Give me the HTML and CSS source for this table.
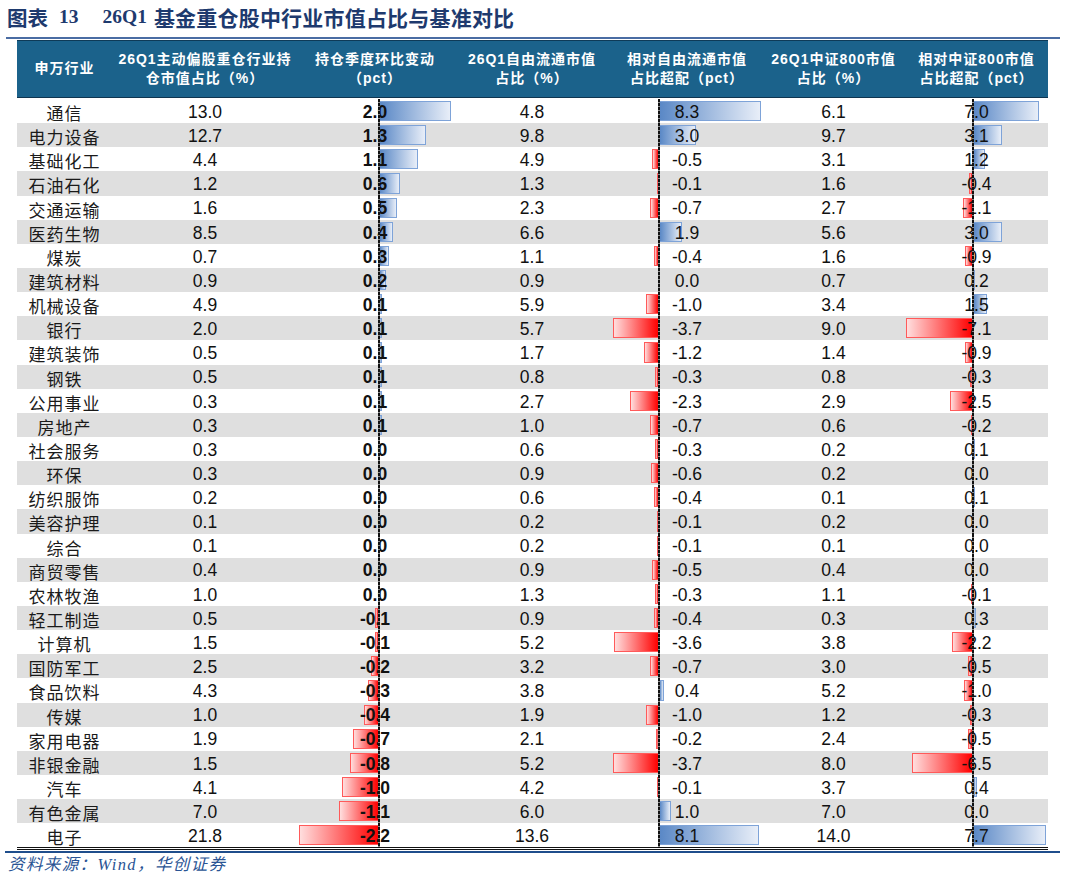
FILE: index.html
```html
<!DOCTYPE html>
<html lang="zh">
<head>
<meta charset="utf-8">
<title>26Q1 基金重仓股中行业市值占比与基准对比</title>
<link rel="stylesheet" href="styles.css">
</head>
<body>
<div class="title">
  <span class="t-lbl">图表</span><span class="t-no">13</span><span class="t-q">26Q1</span><span class="t-main">基金重仓股中行业市值占比与基准对比</span>
</div>
<div class="tbl">
  <div class="head">
    <div class="h">申万行业</div>
    <div class="h">26Q1主动偏股重仓行业持<br>仓市值占比（%）</div>
    <div class="h">持仓季度环比变动<br>（pct）</div>
    <div class="h">26Q1自由流通市值<br>占比（%）</div>
    <div class="h">相对自由流通市值<br>占比超配（pct）</div>
    <div class="h">26Q1中证800市值<br>占比（%）</div>
    <div class="h">相对中证800市值<br>占比超配（pct）</div>
  </div>
  <div class="rows">
    <div class="row"><div class="c name">通信</div><div class="c">13.0</div><div class="c bc b1"><div class="trk"><i class="bar p" style="--a:2.0"></i></div><span class="v bold">2.0</span></div><div class="c">4.8</div><div class="c bc b2"><div class="trk"><i class="bar p" style="--a:8.3"></i></div><span class="v">8.3</span></div><div class="c">6.1</div><div class="c bc b3"><div class="trk"><i class="bar p" style="--a:7.0"></i></div><span class="v">7.0</span></div></div>
    <div class="row"><div class="c name">电力设备</div><div class="c">12.7</div><div class="c bc b1"><div class="trk"><i class="bar p" style="--a:1.3"></i></div><span class="v bold">1.3</span></div><div class="c">9.8</div><div class="c bc b2"><div class="trk"><i class="bar p" style="--a:3.0"></i></div><span class="v">3.0</span></div><div class="c">9.7</div><div class="c bc b3"><div class="trk"><i class="bar p" style="--a:3.1"></i></div><span class="v">3.1</span></div></div>
    <div class="row"><div class="c name">基础化工</div><div class="c">4.4</div><div class="c bc b1"><div class="trk"><i class="bar p" style="--a:1.1"></i></div><span class="v bold">1.1</span></div><div class="c">4.9</div><div class="c bc b2"><div class="trk"><i class="bar n" style="--a:0.5"></i></div><span class="v">-0.5</span></div><div class="c">3.1</div><div class="c bc b3"><div class="trk"><i class="bar p" style="--a:1.2"></i></div><span class="v">1.2</span></div></div>
    <div class="row"><div class="c name">石油石化</div><div class="c">1.2</div><div class="c bc b1"><div class="trk"><i class="bar p" style="--a:0.6"></i></div><span class="v bold">0.6</span></div><div class="c">1.3</div><div class="c bc b2"><div class="trk"><i class="bar n" style="--a:0.1"></i></div><span class="v">-0.1</span></div><div class="c">1.6</div><div class="c bc b3"><div class="trk"><i class="bar n" style="--a:0.4"></i></div><span class="v">-0.4</span></div></div>
    <div class="row"><div class="c name">交通运输</div><div class="c">1.6</div><div class="c bc b1"><div class="trk"><i class="bar p" style="--a:0.5"></i></div><span class="v bold">0.5</span></div><div class="c">2.3</div><div class="c bc b2"><div class="trk"><i class="bar n" style="--a:0.7"></i></div><span class="v">-0.7</span></div><div class="c">2.7</div><div class="c bc b3"><div class="trk"><i class="bar n" style="--a:1.1"></i></div><span class="v">-1.1</span></div></div>
    <div class="row"><div class="c name">医药生物</div><div class="c">8.5</div><div class="c bc b1"><div class="trk"><i class="bar p" style="--a:0.4"></i></div><span class="v bold">0.4</span></div><div class="c">6.6</div><div class="c bc b2"><div class="trk"><i class="bar p" style="--a:1.9"></i></div><span class="v">1.9</span></div><div class="c">5.6</div><div class="c bc b3"><div class="trk"><i class="bar p" style="--a:3.0"></i></div><span class="v">3.0</span></div></div>
    <div class="row"><div class="c name">煤炭</div><div class="c">0.7</div><div class="c bc b1"><div class="trk"><i class="bar p" style="--a:0.3"></i></div><span class="v bold">0.3</span></div><div class="c">1.1</div><div class="c bc b2"><div class="trk"><i class="bar n" style="--a:0.4"></i></div><span class="v">-0.4</span></div><div class="c">1.6</div><div class="c bc b3"><div class="trk"><i class="bar n" style="--a:0.9"></i></div><span class="v">-0.9</span></div></div>
    <div class="row"><div class="c name">建筑材料</div><div class="c">0.9</div><div class="c bc b1"><div class="trk"><i class="bar p" style="--a:0.2"></i></div><span class="v bold">0.2</span></div><div class="c">0.9</div><div class="c bc b2"><div class="trk"></div><span class="v">0.0</span></div><div class="c">0.7</div><div class="c bc b3"><div class="trk"><i class="bar p" style="--a:0.2"></i></div><span class="v">0.2</span></div></div>
    <div class="row"><div class="c name">机械设备</div><div class="c">4.9</div><div class="c bc b1"><div class="trk"><i class="bar p" style="--a:0.1"></i></div><span class="v bold">0.1</span></div><div class="c">5.9</div><div class="c bc b2"><div class="trk"><i class="bar n" style="--a:1.0"></i></div><span class="v">-1.0</span></div><div class="c">3.4</div><div class="c bc b3"><div class="trk"><i class="bar p" style="--a:1.5"></i></div><span class="v">1.5</span></div></div>
    <div class="row"><div class="c name">银行</div><div class="c">2.0</div><div class="c bc b1"><div class="trk"><i class="bar p" style="--a:0.1"></i></div><span class="v bold">0.1</span></div><div class="c">5.7</div><div class="c bc b2"><div class="trk"><i class="bar n" style="--a:3.7"></i></div><span class="v">-3.7</span></div><div class="c">9.0</div><div class="c bc b3"><div class="trk"><i class="bar n" style="--a:7.1"></i></div><span class="v">-7.1</span></div></div>
    <div class="row"><div class="c name">建筑装饰</div><div class="c">0.5</div><div class="c bc b1"><div class="trk"><i class="bar p" style="--a:0.1"></i></div><span class="v bold">0.1</span></div><div class="c">1.7</div><div class="c bc b2"><div class="trk"><i class="bar n" style="--a:1.2"></i></div><span class="v">-1.2</span></div><div class="c">1.4</div><div class="c bc b3"><div class="trk"><i class="bar n" style="--a:0.9"></i></div><span class="v">-0.9</span></div></div>
    <div class="row"><div class="c name">钢铁</div><div class="c">0.5</div><div class="c bc b1"><div class="trk"><i class="bar p" style="--a:0.1"></i></div><span class="v bold">0.1</span></div><div class="c">0.8</div><div class="c bc b2"><div class="trk"><i class="bar n" style="--a:0.3"></i></div><span class="v">-0.3</span></div><div class="c">0.8</div><div class="c bc b3"><div class="trk"><i class="bar n" style="--a:0.3"></i></div><span class="v">-0.3</span></div></div>
    <div class="row"><div class="c name">公用事业</div><div class="c">0.3</div><div class="c bc b1"><div class="trk"><i class="bar p" style="--a:0.1"></i></div><span class="v bold">0.1</span></div><div class="c">2.7</div><div class="c bc b2"><div class="trk"><i class="bar n" style="--a:2.3"></i></div><span class="v">-2.3</span></div><div class="c">2.9</div><div class="c bc b3"><div class="trk"><i class="bar n" style="--a:2.5"></i></div><span class="v">-2.5</span></div></div>
    <div class="row"><div class="c name">房地产</div><div class="c">0.3</div><div class="c bc b1"><div class="trk"><i class="bar p" style="--a:0.1"></i></div><span class="v bold">0.1</span></div><div class="c">1.0</div><div class="c bc b2"><div class="trk"><i class="bar n" style="--a:0.7"></i></div><span class="v">-0.7</span></div><div class="c">0.6</div><div class="c bc b3"><div class="trk"><i class="bar n" style="--a:0.2"></i></div><span class="v">-0.2</span></div></div>
    <div class="row"><div class="c name">社会服务</div><div class="c">0.3</div><div class="c bc b1"><div class="trk"></div><span class="v bold">0.0</span></div><div class="c">0.6</div><div class="c bc b2"><div class="trk"><i class="bar n" style="--a:0.3"></i></div><span class="v">-0.3</span></div><div class="c">0.2</div><div class="c bc b3"><div class="trk"><i class="bar p" style="--a:0.1"></i></div><span class="v">0.1</span></div></div>
    <div class="row"><div class="c name">环保</div><div class="c">0.3</div><div class="c bc b1"><div class="trk"></div><span class="v bold">0.0</span></div><div class="c">0.9</div><div class="c bc b2"><div class="trk"><i class="bar n" style="--a:0.6"></i></div><span class="v">-0.6</span></div><div class="c">0.2</div><div class="c bc b3"><div class="trk"></div><span class="v">0.0</span></div></div>
    <div class="row"><div class="c name">纺织服饰</div><div class="c">0.2</div><div class="c bc b1"><div class="trk"></div><span class="v bold">0.0</span></div><div class="c">0.6</div><div class="c bc b2"><div class="trk"><i class="bar n" style="--a:0.4"></i></div><span class="v">-0.4</span></div><div class="c">0.1</div><div class="c bc b3"><div class="trk"><i class="bar p" style="--a:0.1"></i></div><span class="v">0.1</span></div></div>
    <div class="row"><div class="c name">美容护理</div><div class="c">0.1</div><div class="c bc b1"><div class="trk"></div><span class="v bold">0.0</span></div><div class="c">0.2</div><div class="c bc b2"><div class="trk"><i class="bar n" style="--a:0.1"></i></div><span class="v">-0.1</span></div><div class="c">0.2</div><div class="c bc b3"><div class="trk"></div><span class="v">0.0</span></div></div>
    <div class="row"><div class="c name">综合</div><div class="c">0.1</div><div class="c bc b1"><div class="trk"></div><span class="v bold">0.0</span></div><div class="c">0.2</div><div class="c bc b2"><div class="trk"><i class="bar n" style="--a:0.1"></i></div><span class="v">-0.1</span></div><div class="c">0.1</div><div class="c bc b3"><div class="trk"></div><span class="v">0.0</span></div></div>
    <div class="row"><div class="c name">商贸零售</div><div class="c">0.4</div><div class="c bc b1"><div class="trk"></div><span class="v bold">0.0</span></div><div class="c">0.9</div><div class="c bc b2"><div class="trk"><i class="bar n" style="--a:0.5"></i></div><span class="v">-0.5</span></div><div class="c">0.4</div><div class="c bc b3"><div class="trk"></div><span class="v">0.0</span></div></div>
    <div class="row"><div class="c name">农林牧渔</div><div class="c">1.0</div><div class="c bc b1"><div class="trk"></div><span class="v bold">0.0</span></div><div class="c">1.3</div><div class="c bc b2"><div class="trk"><i class="bar n" style="--a:0.3"></i></div><span class="v">-0.3</span></div><div class="c">1.1</div><div class="c bc b3"><div class="trk"><i class="bar n" style="--a:0.1"></i></div><span class="v">-0.1</span></div></div>
    <div class="row"><div class="c name">轻工制造</div><div class="c">0.5</div><div class="c bc b1"><div class="trk"><i class="bar n" style="--a:0.1"></i></div><span class="v bold">-0.1</span></div><div class="c">0.9</div><div class="c bc b2"><div class="trk"><i class="bar n" style="--a:0.4"></i></div><span class="v">-0.4</span></div><div class="c">0.3</div><div class="c bc b3"><div class="trk"><i class="bar p" style="--a:0.3"></i></div><span class="v">0.3</span></div></div>
    <div class="row"><div class="c name">计算机</div><div class="c">1.5</div><div class="c bc b1"><div class="trk"><i class="bar n" style="--a:0.1"></i></div><span class="v bold">-0.1</span></div><div class="c">5.2</div><div class="c bc b2"><div class="trk"><i class="bar n" style="--a:3.6"></i></div><span class="v">-3.6</span></div><div class="c">3.8</div><div class="c bc b3"><div class="trk"><i class="bar n" style="--a:2.2"></i></div><span class="v">-2.2</span></div></div>
    <div class="row"><div class="c name">国防军工</div><div class="c">2.5</div><div class="c bc b1"><div class="trk"><i class="bar n" style="--a:0.2"></i></div><span class="v bold">-0.2</span></div><div class="c">3.2</div><div class="c bc b2"><div class="trk"><i class="bar n" style="--a:0.7"></i></div><span class="v">-0.7</span></div><div class="c">3.0</div><div class="c bc b3"><div class="trk"><i class="bar n" style="--a:0.5"></i></div><span class="v">-0.5</span></div></div>
    <div class="row"><div class="c name">食品饮料</div><div class="c">4.3</div><div class="c bc b1"><div class="trk"><i class="bar n" style="--a:0.3"></i></div><span class="v bold">-0.3</span></div><div class="c">3.8</div><div class="c bc b2"><div class="trk"><i class="bar p" style="--a:0.4"></i></div><span class="v">0.4</span></div><div class="c">5.2</div><div class="c bc b3"><div class="trk"><i class="bar n" style="--a:1.0"></i></div><span class="v">-1.0</span></div></div>
    <div class="row"><div class="c name">传媒</div><div class="c">1.0</div><div class="c bc b1"><div class="trk"><i class="bar n" style="--a:0.4"></i></div><span class="v bold">-0.4</span></div><div class="c">1.9</div><div class="c bc b2"><div class="trk"><i class="bar n" style="--a:1.0"></i></div><span class="v">-1.0</span></div><div class="c">1.2</div><div class="c bc b3"><div class="trk"><i class="bar n" style="--a:0.3"></i></div><span class="v">-0.3</span></div></div>
    <div class="row"><div class="c name">家用电器</div><div class="c">1.9</div><div class="c bc b1"><div class="trk"><i class="bar n" style="--a:0.7"></i></div><span class="v bold">-0.7</span></div><div class="c">2.1</div><div class="c bc b2"><div class="trk"><i class="bar n" style="--a:0.2"></i></div><span class="v">-0.2</span></div><div class="c">2.4</div><div class="c bc b3"><div class="trk"><i class="bar n" style="--a:0.5"></i></div><span class="v">-0.5</span></div></div>
    <div class="row"><div class="c name">非银金融</div><div class="c">1.5</div><div class="c bc b1"><div class="trk"><i class="bar n" style="--a:0.8"></i></div><span class="v bold">-0.8</span></div><div class="c">5.2</div><div class="c bc b2"><div class="trk"><i class="bar n" style="--a:3.7"></i></div><span class="v">-3.7</span></div><div class="c">8.0</div><div class="c bc b3"><div class="trk"><i class="bar n" style="--a:6.5"></i></div><span class="v">-6.5</span></div></div>
    <div class="row"><div class="c name">汽车</div><div class="c">4.1</div><div class="c bc b1"><div class="trk"><i class="bar n" style="--a:1.0"></i></div><span class="v bold">-1.0</span></div><div class="c">4.2</div><div class="c bc b2"><div class="trk"><i class="bar n" style="--a:0.1"></i></div><span class="v">-0.1</span></div><div class="c">3.7</div><div class="c bc b3"><div class="trk"><i class="bar p" style="--a:0.4"></i></div><span class="v">0.4</span></div></div>
    <div class="row"><div class="c name">有色金属</div><div class="c">7.0</div><div class="c bc b1"><div class="trk"><i class="bar n" style="--a:1.1"></i></div><span class="v bold">-1.1</span></div><div class="c">6.0</div><div class="c bc b2"><div class="trk"><i class="bar p" style="--a:1.0"></i></div><span class="v">1.0</span></div><div class="c">7.0</div><div class="c bc b3"><div class="trk"></div><span class="v">0.0</span></div></div>
    <div class="row"><div class="c name">电子</div><div class="c">21.8</div><div class="c bc b1"><div class="trk"><i class="bar n" style="--a:2.2"></i></div><span class="v bold">-2.2</span></div><div class="c">13.6</div><div class="c bc b2"><div class="trk"><i class="bar p" style="--a:8.1"></i></div><span class="v">8.1</span></div><div class="c">14.0</div><div class="c bc b3"><div class="trk"><i class="bar p" style="--a:7.7"></i></div><span class="v">7.7</span></div></div>
  </div>
</div>
<div class="bline"></div>
<div class="src">资料来源：Wind，华创证券</div>
</body>
</html>
```

FILE: styles.css
```css
* { box-sizing: border-box; }

body {
  margin: 0;
  width: 1066px;
  background: #fff;
  font-family: "Liberation Sans", "Noto Sans CJK SC", sans-serif;
  color: #111;
}

/* ---------- title ---------- */
.title {
  display: flex;
  align-items: center;
  height: 39px;
  margin: 0 6px;
  padding: 0 0 3px 1px;
  border-bottom: 2px solid #4a6ca3;
  color: #1e3a6e;
  font-weight: 700;
  white-space: nowrap;
}
.t-lbl {
  font-family: "Noto Sans CJK SC", sans-serif;
  font-size: 20.5px;
}
.t-no,
.t-q {
  font-family: "Liberation Serif", serif;
  font-size: 19.5px;
}
.t-no { margin-left: 11px; }
.t-q { margin-left: 24px; }
.t-main {
  margin-left: 7px;
  font-family: "Noto Sans CJK SC", sans-serif;
  font-size: 21px;
  letter-spacing: 0.2px;
}

/* ---------- table ---------- */
.tbl {
  --cols: 95px 186px 154px 160px 150px 143px 143px;
  width: 1031px;
  margin: 1px 0 0 17px;
}

.head {
  display: grid;
  grid-template-columns: var(--cols);
  height: 58px;
  background: #1b628b;
  border-top: 1px solid #0e3a57;
  border-bottom: 1px solid #0f3550;
  color: #fff;
}
.h {
  display: flex;
  align-items: center;
  justify-content: center;
  text-align: center;
  font-family: "Liberation Sans", "Noto Sans CJK SC", sans-serif;
  font-size: 14px;
  font-weight: 700;
  line-height: 19.5px;
  letter-spacing: 1px;
}

.rows {
  padding-top: 1px;
  border-bottom: 3px double #111;
}
.row {
  display: grid;
  grid-template-columns: var(--cols);
  height: 24.15px;
}
.row:nth-child(even) { background: #dfdfdf; }

.c {
  display: flex;
  align-items: center;
  justify-content: center;
  padding-top: 3px;
  font-size: 17.5px;
  line-height: 1;
  color: #111;
  white-space: nowrap;
}
.name {
  font-family: "Noto Sans CJK SC", sans-serif;
  font-size: 17px;
  letter-spacing: 1px;
  color: #1a1a1a;
}

/* ---------- data bars ---------- */
.bc { position: relative; }
.b1 { --neg: 2.2; --rng: 4.2; }
.b2 { --neg: 3.7; --rng: 12; }
.b3 { --neg: 7.1; --rng: 14.8; }

.trk {
  position: absolute;
  top: 2px;
  bottom: 2px;
  left: 1px;
  right: 1px;
}
.b3 .trk { right: 2px; }

.trk::after {
  content: "";
  position: absolute;
  top: -2px;
  bottom: -2px;
  left: calc(var(--neg) / var(--rng) * 100%);
  width: 2px;
  margin-left: -1px;
  background: repeating-linear-gradient(to bottom, #111 0 3px, #8a8a8a 3px 4px);
  z-index: 3;
}

.bar {
  position: absolute;
  top: 0;
  bottom: 0;
  width: calc(var(--a) / var(--rng) * 100%);
}
.bar.p {
  left: calc(var(--neg) / var(--rng) * 100%);
  background: linear-gradient(to right, #5a88c6, #e8eef8);
  border: 1px solid #7ea3d8;
}
.bar.n {
  right: calc((var(--rng) - var(--neg)) / var(--rng) * 100%);
  background: linear-gradient(to left, #ff0000, #ffdede);
  border: 1px solid #ff5a5a;
}

.v {
  position: relative;
  z-index: 2;
}
.bold { font-weight: 700; }

/* ---------- footer ---------- */
.bline {
  height: 2.5px;
  margin: 0.5px 6px 0 5px;
  background: #1f4e8c;
}
.src {
  margin: 3px 0 0 8px;
  line-height: 18px;
  font-family: "Liberation Serif", "Noto Sans CJK SC", serif;
  font-size: 16.5px;
  font-style: italic;
  letter-spacing: 1.4px;
  color: #2a5494;
}
```
